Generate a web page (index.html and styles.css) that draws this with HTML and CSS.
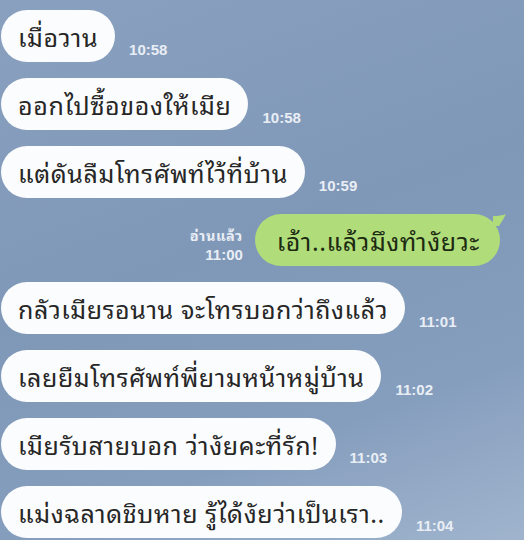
FILE: index.html
```html
<!DOCTYPE html>
<html lang="th">
<head>
<meta charset="utf-8">
<link rel="stylesheet" href="styles.css">
</head>
<body>
<div class="chat">
  <div class="row in"><div class="bubble">เมื่อวาน</div><span class="time">10:58</span></div>
  <div class="row in"><div class="bubble">ออกไปซื้อของให้เมีย</div><span class="time">10:58</span></div>
  <div class="row in"><div class="bubble">แต่ดันลืมโทรศัพท์ไว้ที่บ้าน</div><span class="time">10:59</span></div>
  <div class="row out">
    <div class="meta"><span class="read">อ่านแล้ว</span><span class="time">11:00</span></div>
    <div class="bubble green">เอ้า..แล้วมึงทำงัยวะ<svg class="tail" width="14" height="14" viewBox="0 0 14 14"><path d="M0 2 Q8 2 13 0 Q10 6 6 12 L0 12 Z" fill="#b0dd7a"/></svg></div>
  </div>
  <div class="row in"><div class="bubble">กลัวเมียรอนาน จะโทรบอกว่าถึงแล้ว</div><span class="time">11:01</span></div>
  <div class="row in"><div class="bubble">เลยยืมโทรศัพท์พี่ยามหน้าหมู่บ้าน</div><span class="time">11:02</span></div>
  <div class="row in"><div class="bubble">เมียรับสายบอก ว่างัยคะที่รัก!</div><span class="time">11:03</span></div>
  <div class="row in"><div class="bubble">แม่งฉลาดชิบหาย รู้ได้งัยว่าเป็นเรา..</div><span class="time">11:04</span></div>
</div>
</body>
</html>
```
FILE: styles.css
```css
html, body {
  margin: 0;
  padding: 0;
}
body {
  width: 524px;
  height: 540px;
  overflow: hidden;
  background: linear-gradient(160deg, #89a0bf 0%, #8098b8 45%, #869ebe 75%, #a0b4cd 100%);
  font-family: "Noto Sans Thai Looped", "Noto Sans Thai", "Noto Sans", sans-serif;
}
.chat {
  display: flex;
  flex-direction: column;
  gap: 16px;
  padding-top: 10px;
}
.row {
  display: flex;
  align-items: flex-end;
}
.row.out {
  justify-content: flex-end;
  padding-right: 24px;
}
.bubble {
  position: relative;
  height: 52px;
  box-sizing: border-box;
  display: flex;
  align-items: center;
  background: #fbfcfd;
  color: #262626;
  font-size: 25px;
  letter-spacing: 0.6px;
  border-radius: 26px;
  padding: 0 17px 0 17px;
  margin-left: 1px;
  white-space: nowrap;
}
.bubble.green {
  background: #b0dd7a;
  color: #1d2a12;
  padding: 0 20px 0 22px;
  margin-left: 12px;
}
.tail {
  position: absolute;
  right: -7px;
  top: 0;
}
.time {
  font-family: "Liberation Sans", Arial, sans-serif;
  font-size: 15px;
  font-weight: bold;
  color: #e9eef5;
  margin-left: 14px;
  margin-bottom: 4px;
}
.meta {
  display: flex;
  flex-direction: column;
  align-items: flex-end;
  margin-bottom: 2px;
}
.meta .time {
  margin: 0;
  line-height: 18px;
}
.read {
  font-size: 14.5px;
  font-weight: bold;
  letter-spacing: 0.5px;
  color: #e9eef5;
  line-height: 22px;
}
```
